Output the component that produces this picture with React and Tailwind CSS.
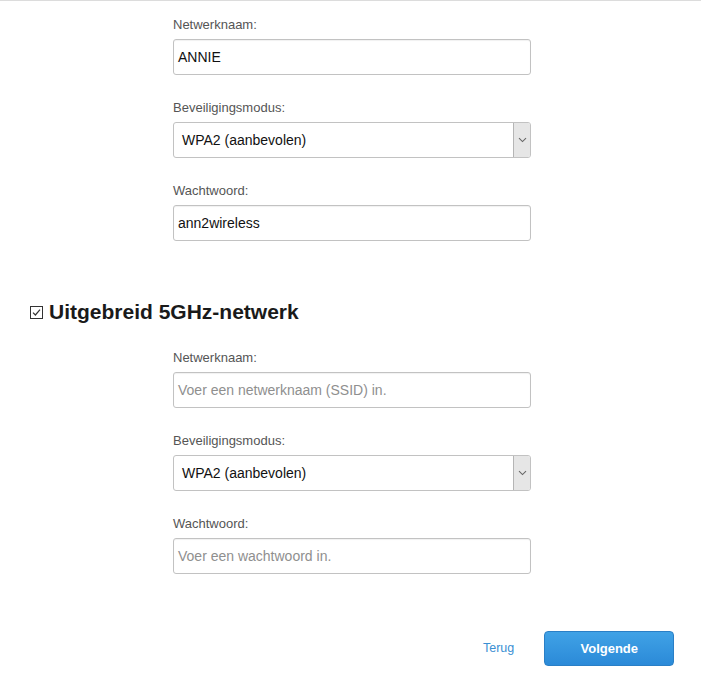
import React from "react";

const font = { fontFamily: '"Liberation Sans", Arial, sans-serif' };

const Label = ({ children }) => (
  <div className="h-[15px] text-[13px] leading-[15px] text-[#555] mb-[7px]">{children}</div>
);

const TextField = ({ value, placeholder }) => (
  <div className="h-[36px] w-[358px] rounded-[3px] border border-[#c2c2c2] bg-white shadow-[inset_0_1px_1px_rgba(0,0,0,0.06)] flex items-center pl-[4px] text-[14px]">
    {value ? (
      <span className="text-[#111]">{value}</span>
    ) : (
      <span className="text-[#8f8f8f]">{placeholder}</span>
    )}
  </div>
);

const SelectField = ({ value }) => (
  <div className="h-[36px] w-[358px] rounded-[3px] border border-[#c2c2c2] bg-white flex items-stretch text-[14px]">
    <div className="flex-1 flex items-center pl-[8px] text-[#111]">{value}</div>
    <div className="w-[17px] bg-[#e6e6e6] border-l border-[#b5b5b5] rounded-r-[2px] flex items-center justify-center">
      <svg width="9" height="6" viewBox="0 0 9 6" fill="none">
        <path d="M1 1.2 L4.5 4.6 L8 1.2" stroke="#666" strokeWidth="1.1" />
      </svg>
    </div>
  </div>
);

const Group = ({ label, children, last }) => (
  <div className={last ? "" : "mb-[25px]"}>
    <Label>{label}</Label>
    {children}
  </div>
);

export default function App() {
  return (
    <div className="min-h-[697px] w-[701px] bg-white border-t border-[#dcdcdc]" style={font}>
      <div className="pl-[173px] pt-[16px]">
        <Group label="Netwerknaam:">
          <TextField value="ANNIE" />
        </Group>
        <Group label="Beveiligingsmodus:">
          <SelectField value="WPA2 (aanbevolen)" />
        </Group>
        <Group label="Wachtwoord:" last>
          <TextField value="ann2wireless" />
        </Group>
      </div>

      <div className="mt-[59px] pl-[30px] h-[24px] flex items-center gap-[6px]">
        <svg width="13" height="13" viewBox="0 0 13 13" fill="none">
          <rect x="0.5" y="0.5" width="12" height="12" stroke="#333" strokeWidth="1" fill="white" />
          <path d="M3 6.6 L5.4 9 L10 3.6" stroke="#333" strokeWidth="1.2" />
        </svg>
        <span className="text-[21px] font-bold text-[#1a1a1a] leading-[24px]">Uitgebreid 5GHz-netwerk</span>
      </div>

      <div className="pl-[173px] mt-[26px]">
        <Group label="Netwerknaam:">
          <TextField placeholder="Voer een netwerknaam (SSID) in." />
        </Group>
        <Group label="Beveiligingsmodus:">
          <SelectField value="WPA2 (aanbevolen)" />
        </Group>
        <Group label="Wachtwoord:" last>
          <TextField placeholder="Voer een wachtwoord in." />
        </Group>
      </div>

      <div className="mt-[57px] flex items-center pl-[483px]">
        <span className="text-[12.5px] text-[#3a8fd3]">Terug</span>
        <button className="ml-[30px] h-[35px] w-[130px] rounded-[4px] border border-[#2a7fc6] bg-gradient-to-b from-[#40a2e6] to-[#2b8ad8] text-white text-[13px] font-bold">
          Volgende
        </button>
      </div>
    </div>
  );
}
